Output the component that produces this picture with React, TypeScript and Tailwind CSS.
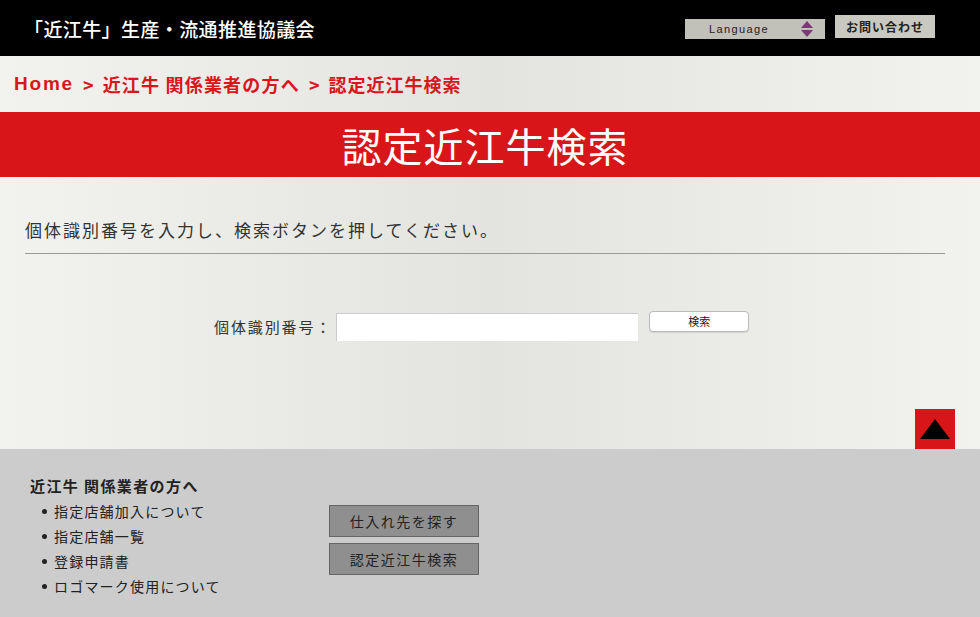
const jp = "font-['Noto_Sans_CJK_JP','Noto_Sans',sans-serif]";

function Header() {
  return (
    <header className="h-[56px] bg-black flex items-center pl-[24px] pr-[45px]">
      <h1 className="text-white text-[19px] font-medium leading-none tracking-[0.4px]">「近江牛」生産・流通推進協議会</h1>
      <div className="ml-auto flex items-start gap-[10px] -mt-[2px]">
        <div className="mt-[4px] w-[140px] h-[20px] bg-[#c1c0b9] flex items-center pl-[24px] pr-[12px]">
          <span className="text-[11px] tracking-[1.4px] text-[#222] font-normal font-['Liberation_Sans',sans-serif]">Language</span>
          <svg className="ml-auto" width="12" height="18" viewBox="0 0 12 18">
            <polygon points="6,1 12,8 0,8" fill="#7b3976" />
            <polygon points="0,10 12,10 6,17" fill="#7b3976" />
          </svg>
        </div>
        <button className="w-[100px] h-[23px] bg-[#c9c8c1] text-[12px] font-bold tracking-[1px] text-[#222]">お問い合わせ</button>
      </div>
    </header>
  );
}

export default function App() {
  return (
    <div className={`${jp} w-[980px] min-h-[617px] bg-[#cccccc]`}>
      <Header />
      <main className="bg-[linear-gradient(90deg,#f2f2ef_0%,#e3e4df_50%,#f2f2ef_100%)]">
        <div className="h-[56px] flex items-center pl-[14px] text-[18px] font-bold text-[#d9161c] gap-[9px]">
          <span className="font-['Liberation_Sans',sans-serif] text-[19px] tracking-[1.8px]">Home</span>
          <span>&gt;</span>
          <span className="tracking-[1.2px]">近江牛 関係業者の方へ</span>
          <span>&gt;</span>
          <span className="tracking-[1px]">認定近江牛検索</span>
        </div>
        <div className="h-[65px] bg-[#d81619] flex items-center justify-center pr-[10px]">
          <h2 className="text-white text-[40px] leading-none tracking-[1px]">認定近江牛検索</h2>
        </div>
        <div className="pt-[41px] pl-[25px] w-[945px]">
          <p className="text-[17px] tracking-[2px] text-[#333] leading-[24px]">個体識別番号を入力し、検索ボタンを押してください。</p>
          <div className="mt-[11px] border-t border-[#999]" />
        </div>
        <div className="mt-[59px] flex items-start pl-[214px]">
          <label className="h-[28px] flex items-center text-[15px] tracking-[1.9px] text-[#333]">個体識別番号：</label>
          <input className="ml-[4px] w-[302px] h-[28px] bg-white border-t border-l border-[#ccc] outline-none" />
          <button className="ml-[11px] -mt-[2px] w-[100px] h-[21px] bg-white border border-[#bbb] rounded-[4px] text-[11px] text-[#222] shadow-[0_1px_1px_rgba(0,0,0,0.1)]">検索</button>
        </div>
        <div className="mt-[68px] flex justify-end pr-[25px]">
          <div className="w-[40px] h-[40px] bg-[#d81619] flex items-center justify-center">
            <svg width="30" height="20" viewBox="0 0 30 20">
              <polygon points="15,0 30,20 0,20" fill="#000" />
            </svg>
          </div>
        </div>
      </main>
      <footer className="bg-[#cccccc] pt-[27px] pl-[30px] flex h-[168px]">
        <div className="w-[299px]">
          <h3 className="text-[15px] font-bold tracking-[1.4px] text-[#222] leading-[20px]">近江牛 関係業者の方へ</h3>
          <ul className="mt-[3px] pl-[12px] text-[14px] tracking-[1.2px] text-[#222]">
            {["指定店舗加入について", "指定店舗一覧", "登録申請書", "ロゴマーク使用について"].map((t) => (
              <li key={t} className="h-[25px] flex items-center gap-[7px]">
                <span className="w-[5px] h-[5px] rounded-full bg-[#222]" />
                {t}
              </li>
            ))}
          </ul>
        </div>
        <div className="mt-[29px] flex flex-col gap-[6px]">
          {["仕入れ先を探す", "認定近江牛検索"].map((t) => (
            <button key={t} className="w-[150px] h-[32px] bg-[#8f8f8f] border border-[#666] text-[14px] tracking-[1.5px] text-[#222]">
              {t}
            </button>
          ))}
        </div>
      </footer>
    </div>
  );
}
